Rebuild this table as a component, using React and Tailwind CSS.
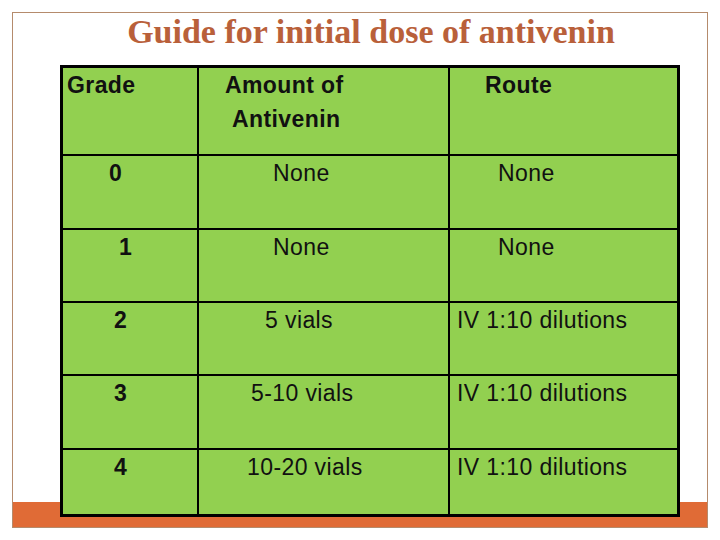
const ROWS = [
  { h: 'h-[74px]', grade: '0', gp: 'pl-[46px]', amount: 'None', ap: 'pl-[74px]', route: 'None', rp: 'pl-[48px]' },
  { h: 'h-[73px]', grade: '1', gp: 'pl-[56px]', amount: 'None', ap: 'pl-[74px]', route: 'None', rp: 'pl-[48px]' },
  { h: 'h-[73px]', grade: '2', gp: 'pl-[51px]', amount: '5 vials', ap: 'pl-[66px]', route: 'IV 1:10 dilutions', rp: 'pl-[7px]' },
  { h: 'h-[74px]', grade: '3', gp: 'pl-[51px]', amount: '5-10 vials', ap: 'pl-[52px]', route: 'IV 1:10 dilutions', rp: 'pl-[7px]' },
  { h: 'h-[66px]', grade: '4', gp: 'pl-[51px]', amount: '10-20 vials', ap: 'pl-[48px]', route: 'IV 1:10 dilutions', rp: 'pl-[7px]' },
]

export default function App() {
  return (
    <div className="w-[720px] h-[540px] bg-white pt-[12px] pl-[12px] overflow-hidden">
      <div className="relative w-[696px] h-[516px] border border-[#b58b6c]">
        {/* orange footer strip, sits behind the table */}
        <div className="absolute left-0 right-0 bottom-0 h-[25px] bg-[#e06b36]" />

        <h1 className="pl-[22px] text-center text-[34px] leading-[38px] font-bold text-[#b9603a] font-['Liberation_Serif','Times_New_Roman',serif]">
          Guide for initial dose of antivenin
        </h1>

        <div className="relative z-10 mt-[14px] ml-[47px] w-[620px] border-[3px] border-black bg-[#92d050] text-[23px] leading-[34px] tracking-[0.4px] text-[#111] font-['Liberation_Sans',Arial,sans-serif]">
          <div className="grid grid-cols-[134px_251px_229px] h-[86px] font-bold">
            <div className="pl-[4px]">Grade</div>
            <div className="border-l-2 border-black">
              <div className="pl-[26px]">Amount of</div>
              <div className="pl-[33px]">Antivenin</div>
            </div>
            <div className="border-l-2 border-black pl-[35px]">Route</div>
          </div>

          {ROWS.map((r) => (
            <div key={r.grade} className={`grid grid-cols-[134px_251px_229px] border-t-2 border-black ${r.h}`}>
              <div className={`font-bold ${r.gp}`}>{r.grade}</div>
              <div className={`border-l-2 border-black ${r.ap}`}>{r.amount}</div>
              <div className={`border-l-2 border-black ${r.rp}`}>{r.route}</div>
            </div>
          ))}
        </div>
      </div>
    </div>
  )
}
